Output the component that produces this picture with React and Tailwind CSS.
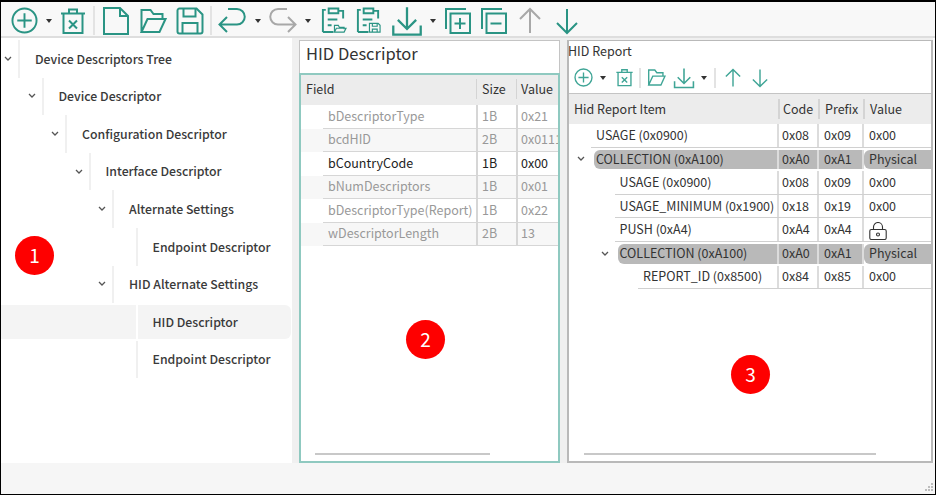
import { Fragment } from "react";

const TEAL = "#2a9484";
const LIGHT_TEAL = "#3fa596";
const GREY = "#a8a8a8";
const FONT = { fontFamily: '"Noto Sans CJK SC", "Noto Sans", sans-serif' };

// Toolbar icons, all drawn on a 28x28 box
const icons = {
  add: (
    <>
      <circle cx="14" cy="14" r="12.5" />
      <path d="M14 6.500v15M6.500 14h15" />
    </>
  ),
  trash: (
    <>
      <path d="M2 6.500h24M10 6V2.500h8V6M4.500 6.500V26h19V6.500" />
      <path d="M10 13.500l8 8M18 13.500l-8 8" />
    </>
  ),
  file: <path d="M2 1h16l8 8v18H2zM18 1v8h8" />,
  folder: <path d="M2.500 25V3h9l3 4h9v5M2.500 25l6-13h18l-6 13z" />,
  save: (
    <>
      <path d="M3.500 1.500h17l6 6v17a2 2 0 0 1-2 2h-21a2 2 0 0 1-2-2v-21a2 2 0 0 1 2-2z" />
      <path d="M7.500 1.500v8h12v-8M6.500 26.500V16h15v10.500" />
    </>
  ),
  undo: <path d="M9 25L1.500 17.500 9 10M1.500 17.500H19a7.750 7.750 0 0 0 0-15.500H10" />,
  redo: <path d="M19 25l7.500-7.500L19 10M26.500 17.500H9A7.750 7.750 0 0 1 9 2h9" />,
  openList: (
    <>
      <path d="M3 26V3h3M9 1.500h10v5H9zM19 4h5v8M3 26h11M8 13h10M8 19h4" />
      <path d="M15 26v-7h4l1 2h5v2M15 26l2-4h10l-2 4z" strokeWidth="1.2" />
    </>
  ),
  saveList: (
    <>
      <path d="M3 26V3h3M9 1.500h10v5H9zM19 4h5v8M3 26h11M8 13h10M8 19h4" />
      <path d="M15 17h9l2 2v7H15zM18 17v3h5v-3M18 26v-3h5v3" strokeWidth="1.2" />
    </>
  ),
  download: <path d="M14 2v18M6 13l8 8 8-8M2 18v8h24v-8" />,
  expand: (
    <>
      <path d="M2 22V2h20" />
      <rect x="6.500" y="6.500" width="19.500" height="19.500" />
      <path d="M16 11v11M10.500 16.500h11" />
    </>
  ),
  collapse: (
    <>
      <path d="M2 22V2h20" />
      <rect x="6.500" y="6.500" width="19.500" height="19.500" />
      <path d="M10.500 16.500h11" />
    </>
  ),
  up: <path d="M14 26V2M4 12L14 2l10 10" />,
  down: <path d="M14 2v24M4 16l10 10 10-10" />,
};

const Icon = ({ name, size = 28, color = TEAL }) => (
  <svg width={size} height={size} viewBox="0 0 28 28" fill="none" stroke={color} strokeWidth={2} className="shrink-0">
    {icons[name]}
  </svg>
);

const Caret = () => <span className="block w-0 h-0 border-x-[3.5px] border-x-transparent border-t-[4px] border-t-[#333]" />;

const Chevron = () => (
  <svg width="8" height="6" viewBox="0 0 8 6" fill="none" stroke="#555" strokeWidth="1.3">
    <path d="M1 1l3 3 3-3" />
  </svg>
);

const LockIcon = () => (
  <svg width="18" height="18" viewBox="0 0 18 18" fill="none" stroke="#333" strokeWidth="1.1" className="mt-[3px]">
    <rect x="0.800" y="7.500" width="16.400" height="10" rx="1.500" />
    <path d="M4.500 7.500V5a4.500 4.500 0 0 1 9 0v2.500" />
    <circle cx="9" cy="12.500" r="1.500" />
  </svg>
);

const treeItems = [
  { depth: 0, text: "Device Descriptors Tree", open: true },
  { depth: 1, text: "Device Descriptor", open: true },
  { depth: 2, text: "Configuration Descriptor", open: true },
  { depth: 3, text: "Interface Descriptor", open: true },
  { depth: 4, text: "Alternate Settings", open: true },
  { depth: 5, text: "Endpoint Descriptor" },
  { depth: 4, text: "HID Alternate Settings", open: true },
  { depth: 5, text: "HID Descriptor", selected: true },
  { depth: 5, text: "Endpoint Descriptor" },
];

const TreeRow = ({ item }) => (
  <div className="h-[37.6px] shrink-0">
    <div className="relative h-full flex">
      {item.selected && <div className="absolute left-0 right-[1px] top-[2px] bottom-[2px] bg-[#f4f4f4] rounded-r-md" />}
      <div className="shrink-0" style={{ width: item.depth * 23.5 }} />
      <div className="w-[17px] shrink-0 flex items-center justify-center pr-[3px]">{item.open && <Chevron />}</div>
      <div className={`relative w-[2px] shrink-0 ${item.selected ? "bg-white" : "bg-[#f0f0f0]"}`} />
      <div className="relative pl-[15px] flex items-center text-[12.3px] font-medium text-[#3a3a3a] whitespace-nowrap">{item.text}</div>
    </div>
  </div>
);

const descriptorRows = [
  ["bDescriptorType", "1B", "0x21"],
  ["bcdHID", "2B", "0x0111"],
  ["bCountryCode", "1B", "0x00", true],
  ["bNumDescriptors", "1B", "0x01"],
  ["bDescriptorType(Report)", "1B", "0x22"],
  ["wDescriptorLength", "2B", "13"],
];

const reportRows = [
  { depth: 0, name: "USAGE (0x0900)", code: "0x08", prefix: "0x09", value: "0x00" },
  { depth: 0, name: "COLLECTION (0xA100)", code: "0xA0", prefix: "0xA1", value: "Physical", group: true },
  { depth: 1, name: "USAGE (0x0900)", code: "0x08", prefix: "0x09", value: "0x00" },
  { depth: 1, name: "USAGE_MINIMUM (0x1900)", code: "0x18", prefix: "0x19", value: "0x00" },
  { depth: 1, name: "PUSH (0xA4)", code: "0xA4", prefix: "0xA4", lock: true },
  { depth: 1, name: "COLLECTION (0xA100)", code: "0xA0", prefix: "0xA1", value: "Physical", group: true },
  { depth: 2, name: "REPORT_ID (0x8500)", code: "0x84", prefix: "0x85", value: "0x00" },
];

const DescriptorTable = () => (
  <div className="flex-1 border-2 border-[#8fc9c0] flex flex-col min-h-0 bg-white">
    <div className="h-[30px] pb-[2px] bg-[#ececec] flex items-center text-[12.5px] text-[#333] shrink-0">
      <div className="w-[175px] pl-[5px]">Field</div>
      <div className="w-[1px] h-[20px] bg-[#d4d4d4]" />
      <div className="w-[39px] pl-[5px]">Size</div>
      <div className="w-[1px] h-[20px] bg-[#d4d4d4]" />
      <div className="pl-[4px]">Value</div>
    </div>
    {descriptorRows.map(([field, size, value, active], i) => (
      <div
        key={i}
        className={`h-[23.5px] flex items-center text-[12.5px] overflow-hidden ${i % 2 ? "bg-[#f7f7f7]" : "bg-white"} ${active ? "text-[#222]" : "text-[#999]"}`}
      >
        <div className="w-[22px] shrink-0" />
        <div className="flex-1 flex h-full items-center border-b border-[#d6d6d6] min-w-0">
          <div className="w-[153px] shrink-0 pl-[5px] whitespace-nowrap">{field}</div>
          <div className="w-[2px] h-full bg-[#d6d6d6] shrink-0" />
          <div className="w-[38px] shrink-0 pl-[4px]">{size}</div>
          <div className="w-[2px] h-full bg-[#d6d6d6] shrink-0" />
          <div className="pl-[3px] whitespace-nowrap">{value}</div>
        </div>
      </div>
    ))}
    <div className="flex-1" />
    <div className="ml-[14px] mb-[6px] w-[175px] h-[2px] bg-[#c8c8c8]" />
  </div>
);

const ReportRow = ({ row }) => {
  const indent = row.depth * 23.5;
  const cellBg = row.group ? "bg-[#b9b9b9]" : "";
  return (
    <div className="h-[23.6px] flex text-[12.5px] text-[#333]">
      <div className="w-[22px] shrink-0 flex items-center justify-center pl-[2px]" style={{ marginLeft: indent }}>
        {row.group && <Chevron />}
      </div>
      <div className={`flex-1 flex min-w-0 ${row.group ? "py-[2px]" : "border-b border-[#d0d0d0]"}`}>
        <div className={`flex-1 min-w-0 flex items-center whitespace-nowrap rounded-l-md ${row.group ? "bg-[#b9b9b9] ml-[3px] pl-[2px]" : "pl-[5px]"}`}>{row.name}</div>
        <div className="w-[2px] bg-[#dcdcdc] shrink-0" />
        <div className={`w-[38px] shrink-0 pl-[3px] flex items-center ${cellBg}`}>{row.code}</div>
        <div className="w-[2px] bg-[#dcdcdc] shrink-0" />
        <div className={`w-[43px] shrink-0 pl-[5px] flex items-center ${cellBg}`}>{row.prefix}</div>
        <div className="w-[2px] bg-[#dcdcdc] shrink-0" />
        <div className={`w-[67px] shrink-0 pl-[5px] flex items-center ${row.group ? "bg-[#b9b9b9] rounded-l-md" : ""}`}>
          {row.lock ? <LockIcon /> : row.value}
        </div>
      </div>
    </div>
  );
};

const ReportTable = () => (
  <div className="flex-1 flex flex-col min-h-0 border-t border-[#c4c4c4]">
    <div className="h-[30px] bg-[#ececec] flex items-center text-[12.5px] text-[#333] shrink-0">
      <div className="w-[209px] pl-[5px]">Hid Report Item</div>
      <div className="w-[2px] h-[20px] bg-[#d4d4d4]" />
      <div className="w-[38px] pl-[3px]">Code</div>
      <div className="w-[2px] h-[20px] bg-[#d4d4d4]" />
      <div className="w-[43px] pl-[5px]">Prefix</div>
      <div className="w-[2px] h-[20px] bg-[#d4d4d4]" />
      <div className="pl-[5px]">Value</div>
    </div>
    {reportRows.map((row, i) => (
      <ReportRow key={i} row={row} />
    ))}
    <div className="flex-1" />
    <div className="ml-[15px] mb-[6px] w-[292px] h-[2px] bg-[#c8c8c8]" />
  </div>
);

const Badge = ({ className, children }) => (
  <div className={`absolute w-[39px] h-[39px] rounded-full bg-[#fe0000] text-white text-[19px] flex items-center justify-center ${className}`}>
    {children}
  </div>
);

const topTools = [
  ["add", 27, "ml-[10px]"],
  ["caret", 0, "ml-[8px]"],
  ["trash", 28, "ml-[7px]"],
  ["sep", 29, "ml-[6px]"],
  ["file", 28, "ml-[7px]"],
  ["folder", 28, "ml-[9px]"],
  ["save", 28, "ml-[9px]"],
  ["sep", 29, "ml-[6px]"],
  ["undo", 28, "ml-[6px]"],
  ["caret", 0, "ml-[9px]"],
  ["redo", 28, "ml-[8px]", GREY],
  ["caret", 0, "ml-[8px]"],
  ["openList", 27, "ml-[9px]"],
  ["saveList", 27, "ml-[8px]"],
  ["download", 32, "ml-[9px]"],
  ["caret", 0, "ml-[7px]"],
  ["expand", 28, "ml-[8px]"],
  ["collapse", 28, "ml-[8px]"],
  ["up", 28, "ml-[8px]", GREY],
  ["down", 28, "ml-[9px]"],
];

const subTools = [
  ["add", 19, "ml-[5px]"],
  ["caret", 0, "ml-[7px]"],
  ["trash", 19, "ml-[9px]"],
  ["sep", 20, "ml-[5px]"],
  ["folder", 19, "ml-[6px]"],
  ["download", 22, "ml-[7px]"],
  ["caret", 0, "ml-[6px]"],
  ["sep", 20, "ml-[7px]"],
  ["up", 20, "ml-[7px]"],
  ["down", 20, "ml-[7px]"],
];

const Tools = ({ items, color = TEAL }) =>
  items.map(([name, size, gap, tint], i) => (
    <Fragment key={i}>
      {name === "caret" ? (
        <span className={`${gap} flex shrink-0`}><Caret /></span>
      ) : name === "sep" ? (
        <span className={`${gap} w-[2px] shrink-0 bg-[#e3e3e3]`} style={{ height: size }} />
      ) : (
        <span className={`${gap} flex shrink-0`}><Icon name={name} size={size} color={tint || color} /></span>
      )}
    </Fragment>
  ));

export default function App() {
  return (
    <div className="relative w-[936px] h-[495px] border border-black border-t-2 bg-white flex flex-col overflow-hidden" style={FONT}>
      {/* --- Top toolbar --- */}
      <div className="h-[36px] bg-[#f8f8f8] border-b-2 border-[#dedede] pt-[3px] flex items-center shrink-0">
        <Tools items={topTools} />
      </div>

      <div className="flex-1 flex min-h-0">
        {/* --- Tree --- */}
        <div className="w-[291px] shrink-0 pt-[2px] flex flex-col">
          {treeItems.map((item, i) => (
            <TreeRow key={i} item={item} />
          ))}
        </div>
        <div className="w-[7px] shrink-0 bg-[#f0f0f0]" />

        {/* --- Descriptor panel --- */}
        <div className="w-[261px] shrink-0 flex flex-col bg-[#f0f0f0] pt-[2px]">
          <div className="h-[33px] pl-[6px] pb-[7px] flex items-center text-[16.5px] text-[#333] shrink-0 bg-white border-t border-l border-r border-[#c4c4c4]">HID Descriptor</div>
          <DescriptorTable />
        </div>
        <div className="w-[7px] shrink-0 bg-[#f0f0f0]" />

        {/* --- Report panel --- */}
        <div className="w-[366px] shrink-0 flex flex-col bg-[#f0f0f0] pt-[2px]">
          <div className="flex-1 flex flex-col min-h-0 bg-white border-2 border-t border-[#b9b9b9]">
            <div className="h-[21px] -ml-[1px] flex items-center text-[12.5px] text-[#333] shrink-0">HID Report</div>
            <div className="h-[31px] flex items-center shrink-0">
              <Tools items={subTools} color={LIGHT_TEAL} />
            </div>
            <ReportTable />
          </div>
        </div>
      </div>

      {/* --- Status bar --- */}
      <div className="h-[31px] bg-[#f6f6f6] shrink-0 flex items-end justify-end">
        <svg width="10" height="10" viewBox="0 0 10 10" fill="#bdbdbd" className="mb-[1px]">
          <rect x="6" y="0" width="2" height="2" />
          <rect x="3" y="3" width="2" height="2" />
          <rect x="6" y="3" width="2" height="2" />
          <rect x="0" y="6" width="2" height="2" />
          <rect x="3" y="6" width="2" height="2" />
          <rect x="6" y="6" width="2" height="2" />
        </svg>
      </div>

      <Badge className="left-[14px] top-[234px]">1</Badge>
      <Badge className="left-[405px] top-[318px]">2</Badge>
      <Badge className="left-[730px] top-[353px]">3</Badge>
    </div>
  );
}
